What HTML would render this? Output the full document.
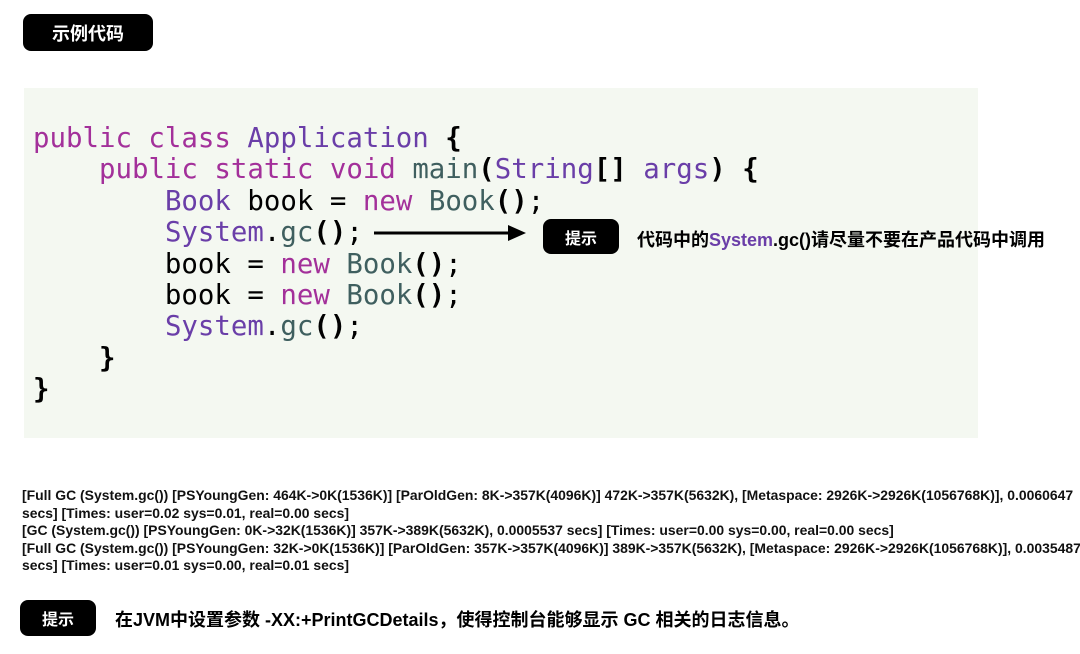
<!DOCTYPE html>
<html><head><meta charset="utf-8"><style>
body{margin:0;width:1080px;height:654px;background:#fff;position:relative;overflow:hidden;font-family:"Liberation Sans","Noto Sans CJK SC",sans-serif}
.badge{position:absolute;background:#000;color:#fff;font-weight:bold;border-radius:8px;display:flex;align-items:center;justify-content:center}
.panel{position:absolute;left:24px;top:88px;width:954px;height:350px;background:#f4f8f1}
pre{position:absolute;left:33px;top:123px;margin:0;font-family:"DejaVu Sans Mono",monospace;font-size:27.4px;line-height:31.4px;color:#000}
.k{color:#a3309a}.t{color:#6a3ea8}.m{color:#3f5f5f}.b{font-weight:bold}
.log{position:absolute;left:22px;top:487px;font-size:14px;font-weight:bold;line-height:17.5px;color:#111;transform:scaleX(0.995);transform-origin:0 0;white-space:nowrap}
</style></head><body>
<div class="badge" style="left:23px;top:14px;width:130px;height:37px;font-size:18px">示例代码</div>
<div class="panel"></div>
<pre><span class="k">public class</span> <span class="t">Application</span> <span class="b">{</span>
    <span class="k">public static void</span> <span class="m">main</span><span class="b">(</span><span class="t">String</span><span class="b">[]</span> <span class="t">args</span><span class="b">)</span> <span class="b">{</span>
        <span class="t">Book</span> book = <span class="k">new</span> <span class="m">Book</span><span class="b">()</span>;
        <span class="t">System</span>.<span class="m">gc</span><span class="b">()</span>;
        book = <span class="k">new</span> <span class="m">Book</span><span class="b">()</span>;
        book = <span class="k">new</span> <span class="m">Book</span><span class="b">()</span>;
        <span class="t">System</span>.<span class="m">gc</span><span class="b">()</span>;
    <span class="b">}</span>
<span class="b">}</span></pre>
<svg style="position:absolute;left:372px;top:224px" width="160" height="18"><line x1="2" y1="9" x2="140" y2="9" stroke="#000" stroke-width="3"/><polygon points="136,1 154,9 136,17" fill="#000"/></svg>
<div class="badge" style="left:543px;top:219px;width:76px;height:35px;font-size:16px">提示</div>
<div style="position:absolute;left:637px;top:226px;font-size:18px;font-weight:bold;color:#000;white-space:nowrap">代码中的<span style="color:#6a3ea8">System</span>.gc()请尽量不要在产品代码中调用</div>
<div class="log">[Full GC (System.gc()) [PSYoungGen: 464K-&gt;0K(1536K)] [ParOldGen: 8K-&gt;357K(4096K)] 472K-&gt;357K(5632K), [Metaspace: 2926K-&gt;2926K(1056768K)], 0.0060647<br>secs] [Times: user=0.02 sys=0.01, real=0.00 secs]<br>[GC (System.gc()) [PSYoungGen: 0K-&gt;32K(1536K)] 357K-&gt;389K(5632K), 0.0005537 secs] [Times: user=0.00 sys=0.00, real=0.00 secs]<br>[Full GC (System.gc()) [PSYoungGen: 32K-&gt;0K(1536K)] [ParOldGen: 357K-&gt;357K(4096K)] 389K-&gt;357K(5632K), [Metaspace: 2926K-&gt;2926K(1056768K)], 0.0035487<br>secs] [Times: user=0.01 sys=0.00, real=0.01 secs]</div>
<div class="badge" style="left:20px;top:600px;width:76px;height:36px;font-size:16px">提示</div>
<div style="position:absolute;left:115px;top:606px;font-size:18px;font-weight:bold;color:#000;white-space:nowrap">在JVM中设置参数 -XX:+PrintGCDetails，使得控制台能够显示 GC 相关的日志信息。</div>
</body></html>
